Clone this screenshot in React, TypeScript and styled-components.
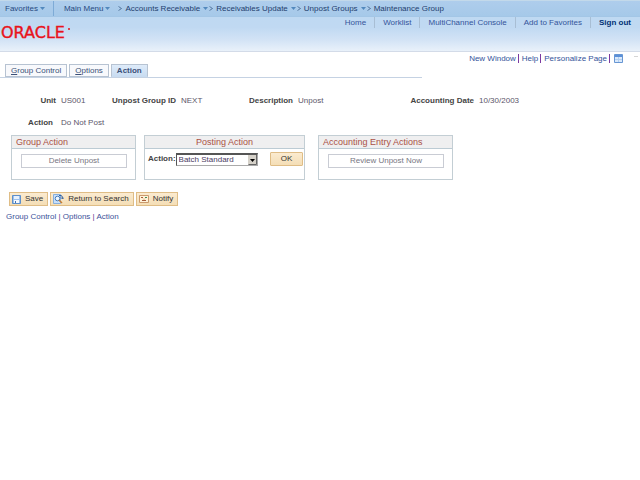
import React from "react";
import styled, { createGlobalStyle } from "styled-components";

const GlobalStyle = createGlobalStyle`
  * { box-sizing: border-box; }
  body {
    margin: 0;
    background: #fff;
    font: 8px/10px "Liberation Sans", Arial, sans-serif;
    color: #444;
  }
  button, select { font: inherit; }
  a { color: #34549a; text-decoration: none; }
`;

const Breadcrumbs = styled.nav`
  display: flex;
  align-items: center;
  height: 17px;
  border-top: 1px solid #c3d9ea;
  border-bottom: 1px solid #a3c6e6;
  background: linear-gradient(#aecdec, #a6c9e9);
  white-space: nowrap;
`;

const MenuButton = styled.button<{ $first?: boolean }>`
  display: flex;
  align-items: center;
  gap: 2px;
  height: 15px;
  padding: ${(p) => (p.$first ? "0 8px 0 5px" : "0 8px 0 10px")};
  border: 0;
  border-right: ${(p) => (p.$first ? "1px solid #7eabd6" : "0")};
  background: none;
  color: #27497f;
`;

const Crumb = styled.span`
  display: flex;
  align-items: center;
  gap: 3px;
  margin-right: 1px;
  a { color: #233e6e; }
`;

const Header = styled.header`
  display: flex;
  justify-content: space-between;
  align-items: flex-start;
  height: 35px;
  border-bottom: 1px solid #d3dbe8;
  background: linear-gradient(#bfd9f2 0%, #c0d9f2 30%, #d1e2f5 65%, #e9f1fa 100%);
`;

const Logo = styled.svg`
  width: 76px;
  height: 18px;
  margin-top: 7px;
`;

const HeaderLinks = styled.nav`
  display: flex;
  padding: 0 9px 0 0;
  white-space: nowrap;
  a { padding: 0 8px; line-height: 11px; }
  a + a { border-left: 1px solid #a8bed4; }
  a:last-child { padding-right: 0; color: #003075; font-weight: bold; }
`;

const PageLinks = styled.div`
  display: flex;
  align-items: center;
  justify-content: flex-end;
  height: 12px;
  padding-right: 2px;
  white-space: nowrap;
  > a { padding: 0 2px 0 3px; border-right: 1px solid #7c3aa0; line-height: 9px; }
  > svg { margin-left: 4px; }
`;

const Corner = styled.span`
  width: 4px;
  height: 1px;
  margin: 0 0 4px 11px;
  background: #d5d5d5;
`;

const Tabs = styled.div`
  display: flex;
  align-items: flex-end;
  gap: 2px;
  width: 66%;
  height: 14px;
  padding-left: 5px;
  border-bottom: 1px solid #c5d2e3;
`;

const Tab = styled.button<{ $active?: boolean }>`
  height: 13px;
  padding: 0 5px;
  border: 1px solid #b7c3d2;
  border-bottom-color: ${(p) => (p.$active ? "#c9dcf1" : "#b7c3d2")};
  background: ${(p) => (p.$active ? "linear-gradient(#dfecfa, #c9dcf1)" : "#f8f9fc")};
  color: #3b5078;
  font-weight: ${(p) => (p.$active ? "bold" : "normal")};
  line-height: 12px;
`;

const Fields = styled.dl`
  display: grid;
  grid-template-columns: 56px 46px 64px 24px 83px 66px 105px 1fr;
  column-gap: 5px;
  row-gap: 12px;
  margin: 18px 0 0;
  white-space: nowrap;
  dt { text-align: right; font-weight: bold; color: #444; }
  dd { margin: 0; color: #5b5569; }
`;

const ActionTerm = styled.dt`
  padding-right: 3px;
  grid-column: 1;
`;

const Panels = styled.div`
  display: flex;
  align-items: stretch;
  padding: 7px 0 0 11px;
`;

const Panel = styled.section<{ $width: number; $gap?: number }>`
  width: ${(p) => p.$width}px;
  min-height: 45px;
  margin-right: ${(p) => p.$gap ?? 0}px;
  border: 1px solid #c3ced4;
`;

const PanelTitle = styled.h2<{ $center?: boolean }>`
  height: 13px;
  margin: 0;
  padding: 0 4px;
  border-bottom: 1px solid #bccbd4;
  background: #efeff0;
  color: #aa5145;
  font-size: 9px;
  font-weight: normal;
  line-height: 12px;
  text-align: ${(p) => (p.$center ? "center" : "left")};
`;

const PanelBody = styled.div<{ $plain?: boolean }>`
  display: flex;
  align-items: center;
  padding: ${(p) => (p.$plain ? "3px 1px 0 3px" : "5px 8px 0 9px")};
  white-space: nowrap;
  label { font-weight: bold; color: #444; }
`;

const PlainButton = styled.button`
  flex: 1;
  height: 14px;
  padding: 0;
  border: 1px solid #c9ccd4;
  background: #fff;
  color: #777682;
`;

const SelectBox = styled.span`
  position: relative;
  display: flex;
  width: 82px;
  height: 13px;
  svg { position: absolute; right: 1px; top: 2px; pointer-events: none; }
`;

const Select = styled.select`
  appearance: none;
  width: 100%;
  padding: 0 12px 0 2px;
  border: 1px solid #aaa;
  border-top: 2px solid #555;
  border-left: 1px solid #555;
  border-radius: 0;
  background: #fff;
  color: #4a3b63;
`;

const ToolButton = styled.button`
  display: flex;
  align-items: center;
  justify-content: center;
  gap: 4px;
  height: 14px;
  padding: 0 4px 0 2px;
  border: 1px solid #dfbd86;
  background: linear-gradient(#fbebd0, #f4deb6);
  color: #333;
`;

const OkButton = styled(ToolButton)`
  width: 33px;
  margin-left: auto;
  padding: 0;
  border-radius: 1px;
`;

const Toolbar = styled.div`
  display: flex;
  gap: 2px;
  padding: 12px 9px 0;
  white-space: nowrap;
`;

const Footer = styled.nav`
  padding: 6px 6px 0;
  color: #5a3a90;
  a { color: #3d5299; }
`;

const Caret = () => (
  <svg width="5" height="3" viewBox="0 0 5 3" aria-hidden="true">
    <path d="M0 0h5L2.500 3z" fill="#5288bd" />
  </svg>
);

const Chevron = () => (
  <svg width="4" height="5" viewBox="0 0 4 5" aria-hidden="true">
    <path d="M.5.5l3 2-3 2" fill="none" stroke="#42658e" strokeWidth=".8" />
  </svg>
);

const GridIcon = () => (
  <svg width="9" height="9" viewBox="0 0 9 9" aria-hidden="true">
    <path d="M.5.5h8v8h-8z" fill="#d9e9fb" stroke="#6796d3" />
    <path d="M1 1h7v2H1z" fill="#5b90d8" />
    <path d="M1 5.500h7M4.500 3v5" stroke="#b3cff0" />
  </svg>
);

const SaveIcon = () => (
  <svg width="9" height="9" viewBox="0 0 9 9" aria-hidden="true">
    <path d="M.5.500h8v8h-8z" fill="#9dc1ec" stroke="#5d8fca" />
    <path d="M2 1h5v3H2z" fill="#e7f1fd" />
    <path d="M2 5h5v3H2z" fill="#f6faff" />
    <path d="M3 6h1v2H3z" fill="#4273b2" />
  </svg>
);

const SearchIcon = () => (
  <svg width="11" height="10" viewBox="0 0 11 10" aria-hidden="true">
    <path d="M.5.5h7v9h-7z" fill="#c9e0f9" stroke="#85afdf" />
    <circle cx="4.500" cy="4.500" r="2.300" fill="#eef7ff" stroke="#477dbe" />
    <path d="M6 6l3 3" stroke="#c47c33" strokeWidth="1.500" />
    <path d="M6 1.500h2q1.500 0 1.500 3M8 3.500l1.500 1.500L11 3.500" fill="none" stroke="#315f9e" />
  </svg>
);

const NotifyIcon = () => (
  <svg width="10" height="8" viewBox="0 0 10 8" aria-hidden="true">
    <path d="M.5.5h9v7h-9z" fill="#fff3d9" stroke="#ca9a6d" />
    <path d="M2 2.500h2M3 5.500h4" stroke="#a75d3b" />
    <path d="M6 2.500h2" stroke="#3f8b55" />
    <path d="M4 3.500l1 1 1-1" fill="none" stroke="#d18b54" strokeWidth=".7" />
  </svg>
);

const DropIcon = () => (
  <svg width="9" height="10" viewBox="0 0 9 10" aria-hidden="true">
    <path d="M0 0h9v10H0z" fill="#d5d1c9" />
    <path d="M.5 9.500h8V0" fill="none" stroke="#666" />
    <path d="M2 4h5L4.500 7z" fill="#000" />
  </svg>
);

const trail = ["Accounts Receivable", "Receivables Update", "Unpost Groups", "Maintenance Group"];

export default function App() {
  return (
    <>
      <GlobalStyle />
      <Breadcrumbs aria-label="Breadcrumb">
        <MenuButton $first>Favorites <Caret /></MenuButton>
        <MenuButton>Main Menu <Caret /></MenuButton>
        {trail.map((name, i) => (
          <Crumb key={name}>
            <Chevron />
            <a href="#">{name}</a>
            {i < trail.length - 1 && <Caret />}
          </Crumb>
        ))}
      </Breadcrumbs>
      <Header>
        <Logo viewBox="0 0 76 18" role="img" aria-label="Oracle">
          <text x="1" y="14" fill="#e8131c" stroke="#e8131c" strokeWidth="0.4" fontFamily="DejaVu Sans" fontSize="16">ORACLE</text>
          <circle cx="69" cy="5" r="1" fill="#e8131c" />
        </Logo>
        <HeaderLinks>
          <a href="#">Home</a>
          <a href="#">Worklist</a>
          <a href="#">MultiChannel Console</a>
          <a href="#">Add to Favorites</a>
          <a href="#">Sign out</a>
        </HeaderLinks>
      </Header>
      <main>
        <PageLinks>
          <a href="#">New Window</a>
          <a href="#">Help</a>
          <a href="#">Personalize Page</a>
          <GridIcon />
          <Corner />
        </PageLinks>
        <Tabs role="tablist">
          <Tab role="tab"><u>G</u>roup Control</Tab>
          <Tab role="tab"><u>O</u>ptions</Tab>
          <Tab role="tab" aria-selected="true" $active>Action</Tab>
        </Tabs>
        <Fields>
          <dt>Unit</dt><dd>US001</dd>
          <dt>Unpost Group ID</dt><dd>NEXT</dd>
          <dt>Description</dt><dd>Unpost</dd>
          <dt>Accounting Date</dt><dd>10/30/2003</dd>
          <ActionTerm>Action</ActionTerm><dd>Do Not Post</dd>
        </Fields>
        <Panels>
          <Panel $width={125} $gap={8}>
            <PanelTitle>Group Action</PanelTitle>
            <PanelBody><PlainButton>Delete Unpost</PlainButton></PanelBody>
          </Panel>
          <Panel $width={161} $gap={13}>
            <PanelTitle $center>Posting Action</PanelTitle>
            <PanelBody $plain>
              <label htmlFor="posting-action">Action:</label>
              <SelectBox>
                <Select id="posting-action"><option>Batch Standard</option></Select>
                <DropIcon />
              </SelectBox>
              <OkButton>OK</OkButton>
            </PanelBody>
          </Panel>
          <Panel $width={135}>
            <PanelTitle>Accounting Entry Actions</PanelTitle>
            <PanelBody><PlainButton>Review Unpost Now</PlainButton></PanelBody>
          </Panel>
        </Panels>
        <Toolbar>
          <ToolButton><SaveIcon />Save</ToolButton>
          <ToolButton><SearchIcon />Return to Search</ToolButton>
          <ToolButton><NotifyIcon />Notify</ToolButton>
        </Toolbar>
        <Footer>
          <a href="#">Group Control</a> | <a href="#">Options</a> | <a href="#">Action</a>
        </Footer>
      </main>
    </>
  );
}
